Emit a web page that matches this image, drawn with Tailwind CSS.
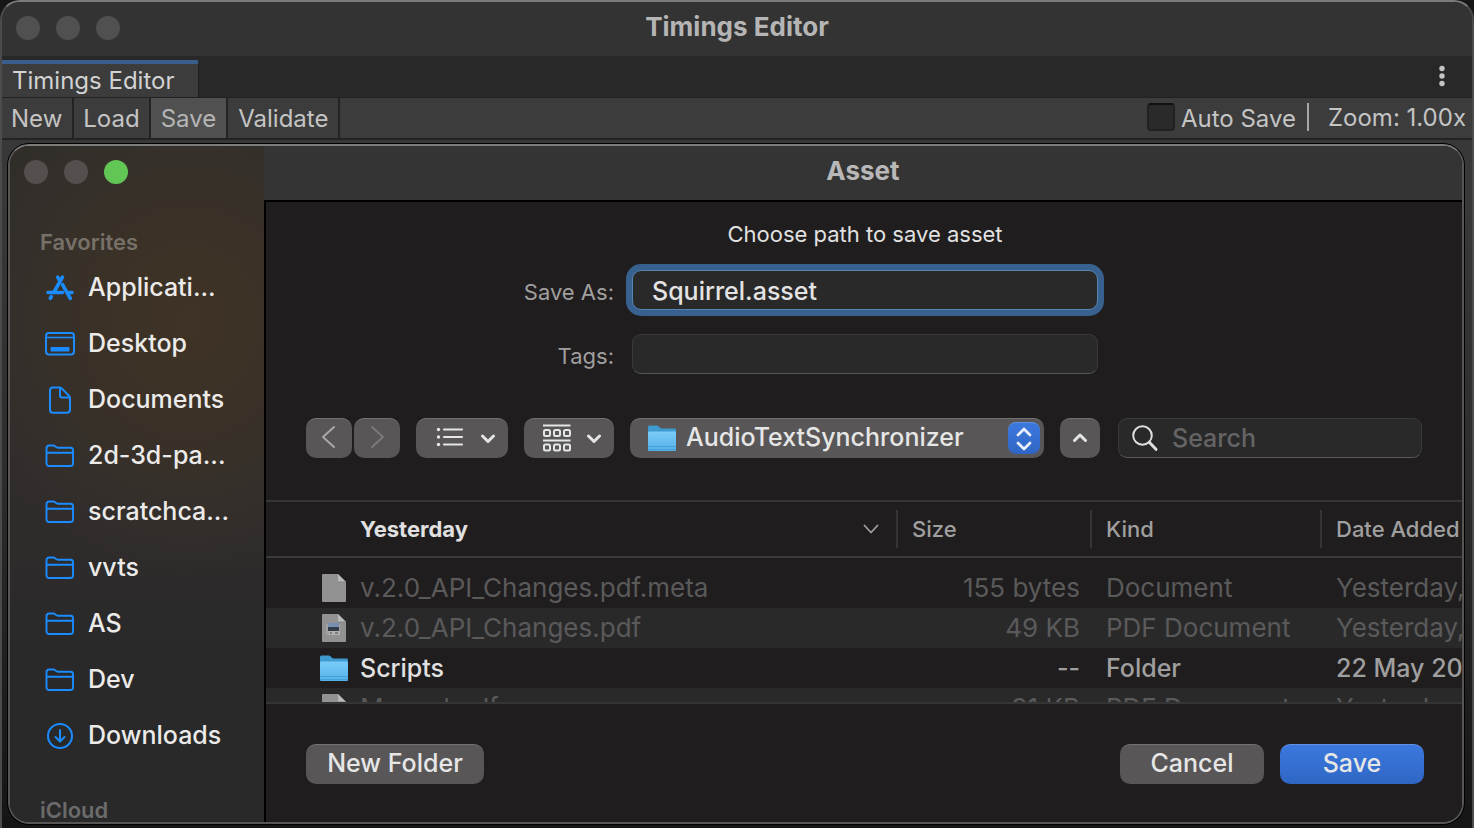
<!DOCTYPE html>
<html lang="en">
<head>
<meta charset="utf-8">
<title>Timings Editor</title>
<script src="https://cdn.jsdelivr.net/npm/@tailwindcss/browser@4"></script>
</head>
<body class="bg-[#161616] font-['Inter',sans-serif] text-[#e4e3e3]">
<svg class="absolute size-0" aria-hidden="true">
  <defs>
    <linearGradient id="folderFront" x1="0" y1="0" x2="0" y2="1"><stop offset="0" stop-color="#7accf8"/><stop offset="1" stop-color="#54b1e8"/></linearGradient>
    <symbol id="folder" viewBox="0 0 30 24"><path d="M1.500 19.500V4A2.500 2.500 0 0 1 4 1.500h4.200c1 0 1.400.3 2.100.9l.8.7c.5.4.9.6 1.700.6H25.500a2.500 2.500 0 0 1 2.500 2.500v13.300a2.500 2.500 0 0 1-2.500 2.500H4a2.500 2.500 0 0 1-2.500-2.500zM1.500 8.700H28" fill="none" stroke="#1a8cff" stroke-width="1.900"/></symbol>
    <symbol id="blueFolder" viewBox="0 0 28 27"><path d="M0 2Q0 .5 1.500 .5H8.500Q10 .5 11 1.700L12 2.700Q12.800 3.500 14 3.500H27Q28 3.500 28 5V24H0z" fill="#3f9ad0"/><path d="M0 7.500Q0 6.500 1 6.500H27Q28 6.500 28 7.500V25Q28 26 27 26H1Q0 26 0 25z" fill="url(#folderFront)"/><path d="M0 21.500H28M0 24.500H28" stroke="#3f9bd4" stroke-width=".8"/></symbol>
    <symbol id="page" viewBox="0 0 24 28"><path d="M0 1Q0 0 1 0H16L24 8V27Q24 28 23 28H1Q0 28 0 27z" fill="#929292"/><path d="M16 0L24 8H17Q16 8 16 7z" fill="#b9b9b9"/><path d="M16 8H24" stroke="#7d7d7d" stroke-width=".8"/></symbol>
    <symbol id="chevronDown" viewBox="0 0 16 10"><path d="M2.500 2L8 7.500L13.500 2" fill="none" stroke="#e6e6e6" stroke-width="3" stroke-linecap="round" stroke-linejoin="round"/></symbol>
  </defs>
</svg>

<div class="flex h-screen flex-col overflow-hidden rounded-t-[20px] border-x-2 border-t-2 border-x-[#4b4b4b] border-t-[#7b7b7b] bg-[#383838]">
  <header class="relative flex h-[54px] shrink-0 items-center justify-center bg-[#333333] pb-[2px]">
    <div class="absolute left-[14px] flex gap-4">
      <span class="size-6 rounded-full bg-[#505050]"></span><span class="size-6 rounded-full bg-[#505050]"></span><span class="size-6 rounded-full bg-[#505050]"></span>
    </div>
    <h1 class="pb-[2px] text-[26px] leading-8 font-bold text-[#b5b5b5]">Timings Editor</h1>
  </header>

  <div class="flex h-[42px] shrink-0 items-end justify-between border-b border-[#222222] bg-[#282828]">
    <button class="h-[37px] rounded-tr-[3px] border-t-4 border-r border-t-[#3a5f8c] border-r-[#1f1f1f] bg-[#3c3c3c] pr-6 pl-[10px] text-2xl leading-8 text-[#d2d2d2]">Timings Editor</button>
    <button class="mr-6 mb-2 h-6" aria-label="Window menu">
      <svg class="h-6 w-[12px]" viewBox="0 0 12 24" fill="#c4c4c4"><circle cx="6" cy="3.500" r="2.700"/><circle cx="6" cy="11" r="2.700"/><circle cx="6" cy="18.500" r="2.700"/></svg>
    </button>
  </div>

  <div class="flex h-[42px] shrink-0 items-stretch border-b-2 border-[#232323] bg-[#3c3c3c] text-2xl text-[#c4c4c4]">
    <button class="border-r-2 border-[#232323] pt-[2px] pr-[10px] pl-[9px]">New</button>
    <button class="border-r-2 border-[#232323] px-[9px] pt-[2px]">Load</button>
    <button class="border-r-2 border-[#232323] bg-[#505050] px-[10px] pt-[2px] text-[#b5b5b5]">Save</button>
    <button class="border-r-2 border-[#232323] px-[10px] pt-[2px]">Validate</button>
    <label class="ml-auto flex items-center gap-[6px]">
      <input type="checkbox" class="mb-[2px] size-7 appearance-none rounded-[4px] border-2 border-[#212121] border-t-[#101010] bg-[#2a2a2a]"><span class="pt-[2px]">Auto Save</span>
    </label>
    <span class="mt-[5px] ml-[11px] h-7 w-[2px] bg-[#a6a6a6]"></span>
    <span class="self-center pr-[6px] pl-[19px]">Zoom: 1.00x</span>
  </div>

  <div class="flex min-h-0 flex-1 bg-linear-to-b from-[#383838] from-10% via-[#2c2c2c] via-50% to-[#161515] pt-[3px] pr-[7px] pb-[3px] pl-[5px]">
    <section role="dialog" aria-label="Asset" class="flex min-w-0 flex-1 overflow-hidden rounded-[22px] border border-black">
      <div class="flex min-w-0 flex-1 overflow-hidden rounded-[21px] border-2 border-[#575655] border-t-[#7c7c7b]">
        <aside class="flex w-64 shrink-0 flex-col overflow-hidden border-r-2 border-black bg-[#292929] bg-[radial-gradient(ellipse_240px_260px_at_70%_26%,#3e3325_0%,#3b3126_35%,#35302a_65%,transparent_100%),linear-gradient(to_bottom,#302d29_0%,#322c2c_40%,#2e2b2b_60%,#292929_75%)]">
          <div class="flex gap-4 pt-[14px] pl-[14px]">
            <span class="size-6 rounded-full bg-[#544f4d]"></span><span class="size-6 rounded-full bg-[#544f4d]"></span><span class="size-6 rounded-full bg-[#62c655]"></span>
          </div>
          <h2 class="mt-[42px] pl-[30px] text-[22px] leading-8 font-semibold text-[#777069]">Favorites</h2>
          <ul class="mt-[2px] shrink-0 pl-[35px] text-[25px] font-medium text-[#ecebea]">
            <li class="h-14"><a href="#" class="flex h-14 items-center gap-[13px]"><svg class="h-7 w-[30px]" viewBox="0 0 30 28" fill="none" stroke="#1a8cff" stroke-linecap="round" stroke-width="3.600"><path d="M12.700 3.200L15.200 7.500M17.500 3.200L9.300 17.500M6.300 22.700L5.300 24.300"/><path d="M3 18.500H17.500M24.500 18.500H27"/><path d="M17.500 10.700L25.300 24.300"/></svg>Applicati...</a></li>
            <li class="h-14"><a href="#" class="flex h-14 items-center gap-[13px]"><svg class="h-6 w-[30px]" viewBox="0 0 30 24"><rect x="1" y="1" width="28" height="21.500" rx="3" fill="none" stroke="#1a8cff" stroke-width="2"/><path d="M1 5.500H29" stroke="#1a8cff" stroke-width="1.600"/><rect x="5.500" y="15" width="19" height="4.500" rx="1" fill="#1a8cff"/></svg>Desktop</a></li>
            <li class="h-14"><a href="#" class="flex h-14 items-center gap-[13px]"><svg class="h-7 w-[30px]" viewBox="0 0 30 28" fill="none" stroke="#1a8cff" stroke-width="2"><path d="M8 1.500H14.500Q15.800 1.500 16.700 2.400L24 9.700Q25 10.700 25 12V23.800Q25 26.800 22 26.800H8Q5 26.800 5 23.800V4.500Q5 1.500 8 1.500z"/><path d="M15 1.500V9.500Q15 11.500 17 11.500H25"/></svg>Documents</a></li>
            <li class="h-14"><a href="#" class="flex h-14 items-center gap-[13px]"><svg class="h-6 w-[30px]"><use href="#folder"/></svg>2d-3d-pa...</a></li>
            <li class="h-14"><a href="#" class="flex h-14 items-center gap-[13px]"><svg class="h-6 w-[30px]"><use href="#folder"/></svg>scratchca...</a></li>
            <li class="h-14"><a href="#" class="flex h-14 items-center gap-[13px]"><svg class="h-6 w-[30px]"><use href="#folder"/></svg>vvts</a></li>
            <li class="h-14"><a href="#" class="flex h-14 items-center gap-[13px]"><svg class="h-6 w-[30px]"><use href="#folder"/></svg>AS</a></li>
            <li class="h-14"><a href="#" class="flex h-14 items-center gap-[13px]"><svg class="h-6 w-[30px]"><use href="#folder"/></svg>Dev</a></li>
            <li class="h-14"><a href="#" class="flex h-14 items-center gap-[13px]"><svg class="h-7 w-[30px]" viewBox="0 0 30 28" fill="none" stroke="#1a8cff" stroke-width="2"><circle cx="15" cy="14" r="12"/><path d="M15 8V19M10.500 15L15 19.500L19.500 15" stroke-linecap="round" stroke-linejoin="round"/></svg>Downloads</a></li>
          </ul>
          <h2 class="mt-[34px] pl-[30px] text-[22px] leading-6 font-semibold text-[#6b6b6b]">iCloud</h2>
        </aside>

        <main class="flex min-w-0 flex-1 flex-col bg-[#1f1d1e]">
          <div class="-ml-[2px] flex h-14 shrink-0 items-center justify-center border-b-2 border-black bg-[#353434]">
            <h2 class="pb-1 text-[26px] leading-8 font-bold text-[#b9b8b8]">Asset</h2>
          </div>
          <form class="shrink-0 pl-[2px]">
            <p class="mt-4 text-center text-[22px] leading-8 text-[#e2e1e1]">Choose path to save asset</p>
            <div class="mt-5 grid grid-cols-[1fr_466px_1fr] items-center gap-x-[18px] gap-y-6">
              <label for="name" class="pt-1 text-right text-[22px] text-[#a09f9f]">Save As:</label>
              <input id="name" value="Squirrel.asset" class="h-10 min-w-0 rounded-[9px] border border-[#5585b4] bg-[#2a292a] px-[19px] pt-[2px] text-[25px] font-medium text-[#e4e3e3] ring-[6px] ring-[#38618f] outline-none">
              <span></span>
              <label for="tags" class="pt-1 text-right text-[22px] text-[#a09f9f]">Tags:</label>
              <input id="tags" class="h-10 min-w-0 rounded-[9px] border border-[#3b3a3b] border-b-[#565556] bg-[#2a292a] px-[19px] text-[25px] outline-none">
              <span></span>
            </div>
          </form>

          <div class="mt-11 flex h-10 shrink-0 items-stretch gap-4 px-10">
            <div class="flex gap-[2px]">
              <button aria-label="Back" class="flex w-[46px] items-center justify-center rounded-[10px] border-t border-[#737273] bg-[#585657] pb-[3px]"><svg class="h-6 w-4" viewBox="0 0 16 24"><path d="M13 2L2 12L13 22" fill="none" stroke="#aaa9aa" stroke-width="2" stroke-linecap="round" stroke-linejoin="round"/></svg></button>
              <button aria-label="Forward" class="flex w-[46px] items-center justify-center rounded-[10px] border-t border-[#737273] bg-[#585657] pb-[3px]"><svg class="h-6 w-4" viewBox="0 0 16 24"><path d="M3 2L14 12L3 22" fill="none" stroke="#7b797a" stroke-width="2" stroke-linecap="round" stroke-linejoin="round"/></svg></button>
            </div>
            <button aria-label="List view" class="flex w-[92px] items-center justify-between rounded-[10px] border-t border-[#737273] bg-[#585657] pr-3 pb-[2px] pl-5">
              <svg class="h-6 w-[28px]" viewBox="0 0 28 24" fill="#e6e6e6"><circle cx="2.500" cy="3.500" r="1.700"/><circle cx="2.500" cy="11" r="1.700"/><circle cx="2.500" cy="18.500" r="1.700"/><path d="M8 3.500H26M8 11H26M8 18.500H26" stroke="#e6e6e6" stroke-width="2.200" stroke-linecap="round"/></svg>
              <svg class="mt-[3px] h-[10px] w-4"><use href="#chevronDown"/></svg>
            </button>
            <button aria-label="Group items" class="flex w-[90px] items-center justify-between rounded-[10px] border-t border-[#737273] bg-[#585657] pr-3 pb-[2px] pl-[18px]">
              <svg class="h-7 w-[29px]" viewBox="0 0 29 28" fill="none" stroke="#e6e6e6" stroke-width="2"><path d="M1 1.500H28.500M1 16.500H28.500"/><rect x="2" y="6" width="6" height="6" rx="1.500"/><rect x="12" y="6" width="6" height="6" rx="1.500"/><rect x="22" y="6" width="6" height="6" rx="1.500"/><rect x="2" y="20.500" width="6" height="6" rx="1.500"/><rect x="12" y="20.500" width="6" height="6" rx="1.500"/><rect x="22" y="20.500" width="6" height="6" rx="1.500"/></svg>
              <svg class="mt-[3px] h-[10px] w-4"><use href="#chevronDown"/></svg>
            </button>
            <div class="relative min-w-0 flex-1">
              <select aria-label="Location" class="h-10 w-full appearance-none rounded-[10px] border-t border-[#737273] bg-[#585657] pb-1 pl-14 text-[25px] font-medium text-[#e6e6e6] outline-none"><option>AudioTextSynchronizer</option></select>
              <svg class="pointer-events-none absolute top-[7px] left-[18px] h-[27px] w-7"><use href="#blueFolder"/></svg>
              <span class="pointer-events-none absolute top-1 right-1 flex size-8 items-center justify-center rounded-[8px] border-t border-[#6091e2] bg-linear-to-b from-[#3b78de] to-[#2f66c4]"><svg class="h-6 w-4" viewBox="0 0 16 24" fill="none" stroke="#e8eefa" stroke-width="2.800" stroke-linecap="round" stroke-linejoin="round"><path d="M2 8L8 2L14 8M2 16L8 22L14 16"/></svg></span>
            </div>
            <button aria-label="Collapse" class="flex w-10 items-center justify-center rounded-[10px] border-t border-[#737273] bg-[#585657] pb-[2px]"><svg class="h-[10px] w-4" viewBox="0 0 16 10"><path d="M2.500 7.500L8 2L13.500 7.500" fill="none" stroke="#e6e6e6" stroke-width="3" stroke-linecap="round" stroke-linejoin="round"/></svg></button>
            <label class="ml-[2px] flex w-[304px] items-center gap-[13px] rounded-[9px] border border-[#3b3a3b] border-b-[#5c5b5c] bg-[#2a292a] pl-3">
              <svg class="h-7 w-7 shrink-0" viewBox="0 0 28 28" fill="none" stroke="#dfdedf" stroke-linecap="round"><circle cx="11.500" cy="11.500" r="9.300" stroke-width="2"/><path d="M18.300 18.300L25 25.300" stroke-width="3"/></svg>
              <input type="search" aria-label="Search" placeholder="Search" class="min-w-0 flex-1 bg-transparent pt-[2px] text-[25px] font-medium outline-none placeholder:text-[#656465]">
            </label>
          </div>

          <div class="mt-[42px] h-[204px] shrink-0 overflow-hidden border-y-2 border-[#363536]">
            <table class="w-full table-fixed text-left whitespace-nowrap">
              <colgroup><col><col class="w-[194px]"><col class="w-[230px]"><col class="w-[140px]"></colgroup>
              <thead class="text-[22px] text-[#a09f9f]">
                <tr class="h-[55px] border-b-2 border-[#3b3a3b]">
                  <th class="p-0 font-bold text-[#e2e1e1]"><div class="flex h-[38px] items-center justify-between border-r-2 border-[#363536] pr-[17px] pl-[94px]">Yesterday<svg class="h-3 w-4" viewBox="0 0 16 12"><path d="M1.500 2.500L8 9.500L14.500 2.500" fill="none" stroke="#a09f9f" stroke-width="1.800" stroke-linecap="round" stroke-linejoin="round"/></svg></div></th>
                  <th class="p-0 font-medium"><div class="flex h-[38px] items-center border-r-2 border-[#363536] pl-[14px]">Size</div></th>
                  <th class="p-0 font-medium"><div class="flex h-[38px] items-center border-r-2 border-[#363536] pl-[14px]">Kind</div></th>
                  <th class="p-0 pl-[14px] font-medium">Date Added</th>
                </tr>
              </thead>
              <tbody class="text-[26px] leading-10 text-[#5b5a5b]">
                <tr class="h-[11px]"><td colspan="4" class="p-0"></td></tr>
                <tr class="h-10"><td class="p-0"><div class="flex items-center gap-[14px] pl-14"><svg class="h-7 w-6"><use href="#page"/></svg>v.2.0_API_Changes.pdf.meta</div></td><td class="p-0 pr-3 text-right">155 bytes</td><td class="p-0 pl-[14px]">Document</td><td class="overflow-hidden p-0 pl-[14px]">Yesterday, 14:20</td></tr>
                <tr class="h-10 bg-[#2a292a]"><td class="p-0"><div class="flex items-center gap-[14px] pl-14"><svg class="h-7 w-6" viewBox="0 0 24 28"><use href="#page" width="24" height="28"/><rect x="4" y="10" width="14" height="11" rx="1" fill="#a1a1a1"/><path d="M6 9H17V13H6z" fill="#7890b0"/><path d="M6 13H17V17H6z" fill="#343c49"/><path d="M7 17H18V21H7z" fill="#b1b1b4"/><path d="M8 19H10M13 19H16" stroke="#454a52"/></svg>v.2.0_API_Changes.pdf</div></td><td class="p-0 pr-3 text-right">49 KB</td><td class="p-0 pl-[14px]">PDF Document</td><td class="overflow-hidden p-0 pl-[14px]">Yesterday, 14:20</td></tr>
                <tr class="h-10 text-[25px] font-medium text-[#a09f9f]"><td class="p-0 text-[#e2e1e1]"><div class="flex items-center gap-3 pl-[54px]"><svg class="h-[27px] w-7"><use href="#blueFolder"/></svg>Scripts</div></td><td class="p-0 pr-3 text-right">--</td><td class="p-0 pl-[14px]">Folder</td><td class="overflow-hidden p-0 pl-[14px]">22 May 2021</td></tr>
                <tr class="h-10 bg-[#2a292a]"><td class="p-0"><div class="flex items-center gap-[14px] pl-14"><svg class="h-7 w-6"><use href="#page"/></svg>Manual.pdf</div></td><td class="p-0 pr-3 text-right">91 KB</td><td class="p-0 pl-[14px]">PDF Document</td><td class="overflow-hidden p-0 pl-[14px]">Yesterday, 14:20</td></tr>
              </tbody>
            </table>
          </div>

          <footer class="mt-10 flex h-10 shrink-0 gap-4 pr-[38px] pl-10 text-[25px] leading-9 font-medium text-[#e6e6e6]">
            <button class="mr-auto w-[178px] rounded-[10px] border-t border-[#737273] bg-[#585657] pb-1">New Folder</button>
            <button class="w-36 rounded-[10px] border-t border-[#737273] bg-[#585657] pb-1">Cancel</button>
            <button class="w-36 rounded-[10px] border-t border-[#6091e2] bg-linear-to-b from-[#3b78de] to-[#2f66c4] pb-1">Save</button>
          </footer>
        </main>
      </div>
    </section>
  </div>
</div>
</body>
</html>
